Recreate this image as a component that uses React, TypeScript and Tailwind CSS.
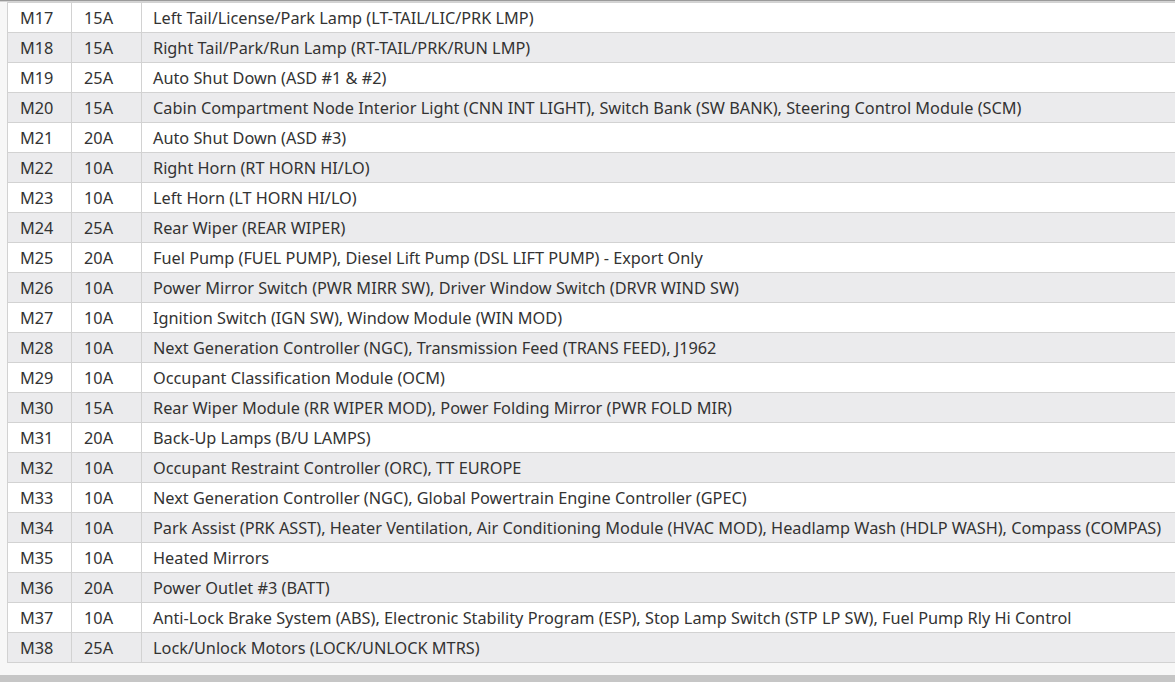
const rows: [string, string, string][] = [
  ["M17", "15A", "Left Tail/License/Park Lamp (LT-TAIL/LIC/PRK LMP)"],
  ["M18", "15A", "Right Tail/Park/Run Lamp (RT-TAIL/PRK/RUN LMP)"],
  ["M19", "25A", "Auto Shut Down (ASD #1 & #2)"],
  ["M20", "15A", "Cabin Compartment Node Interior Light (CNN INT LIGHT), Switch Bank (SW BANK), Steering Control Module (SCM)"],
  ["M21", "20A", "Auto Shut Down (ASD #3)"],
  ["M22", "10A", "Right Horn (RT HORN HI/LO)"],
  ["M23", "10A", "Left Horn (LT HORN HI/LO)"],
  ["M24", "25A", "Rear Wiper (REAR WIPER)"],
  ["M25", "20A", "Fuel Pump (FUEL PUMP), Diesel Lift Pump (DSL LIFT PUMP) - Export Only"],
  ["M26", "10A", "Power Mirror Switch (PWR MIRR SW), Driver Window Switch (DRVR WIND SW)"],
  ["M27", "10A", "Ignition Switch (IGN SW), Window Module (WIN MOD)"],
  ["M28", "10A", "Next Generation Controller (NGC), Transmission Feed (TRANS FEED), J1962"],
  ["M29", "10A", "Occupant Classification Module (OCM)"],
  ["M30", "15A", "Rear Wiper Module (RR WIPER MOD), Power Folding Mirror (PWR FOLD MIR)"],
  ["M31", "20A", "Back-Up Lamps (B/U LAMPS)"],
  ["M32", "10A", "Occupant Restraint Controller (ORC), TT EUROPE"],
  ["M33", "10A", "Next Generation Controller (NGC), Global Powertrain Engine Controller (GPEC)"],
  ["M34", "10A", "Park Assist (PRK ASST), Heater Ventilation, Air Conditioning Module (HVAC MOD), Headlamp Wash (HDLP WASH), Compass (COMPAS)"],
  ["M35", "10A", "Heated Mirrors"],
  ["M36", "20A", "Power Outlet #3 (BATT)"],
  ["M37", "10A", "Anti-Lock Brake System (ABS), Electronic Stability Program (ESP), Stop Lamp Switch (STP LP SW), Fuel Pump Rly Hi Control"],
  ["M38", "25A", "Lock/Unlock Motors (LOCK/UNLOCK MTRS)"],
];

export default function App() {
  return (
    <div
      className="w-[1175px] h-[682px] overflow-hidden flex flex-col bg-[#f7f7f7]"
      style={{ fontFamily: '"Noto Sans", "Open Sans", sans-serif' }}
    >
      <div className="h-px bg-[#9a9a9a]" />
      <div className="h-px bg-[#d4d4d4]" />
      <div className="pl-[7px] overflow-hidden">
        <table className="w-[1200px] border-collapse text-[16.3px] text-[#333333]">
          <tbody>
            {rows.map(([id, amp, desc], i) => (
              <tr key={id} className={i % 2 === 0 ? "bg-white" : "bg-[#ebebed]"}>
                <td className="w-[64px] h-[30px] border border-[#d2d2d2] pl-3 pt-px whitespace-nowrap">{id}</td>
                <td className="w-[70px] h-[30px] border border-[#d2d2d2] pl-3 pt-px whitespace-nowrap">{amp}</td>
                <td className="h-[30px] border border-[#d2d2d2] pl-[11px] pt-px whitespace-nowrap">{desc}</td>
              </tr>
            ))}
          </tbody>
        </table>
      </div>
      <div className="flex-1" />
      <div className="h-[7px] bg-[#c6c6c6]" />
    </div>
  );
}
